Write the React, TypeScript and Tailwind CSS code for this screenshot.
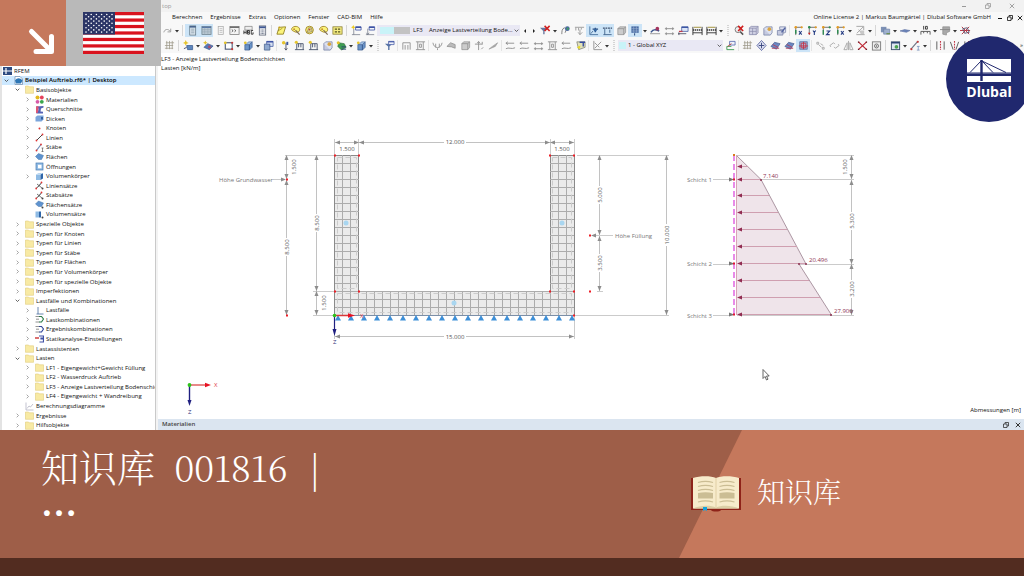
import type { ReactNode } from "react";

/* ---------- toolbar icons, drawn on a 12 x 12 grid ---------- */

const ICONS: Record<string, ReactNode> = {
  redo: <path d="M2 8c1-4 5-4 7-1M9.500 4v3.500H6" fill="none" stroke="#999" />,
  panel: (
    <g>
      <rect x="3" y="1" width="6.500" height="10" fill="#dbe6ef" stroke="#5d7280" strokeWidth=".8" />
      <path d="M3 2h6.500" stroke="#3b5a86" strokeWidth="1.600" />
      <path d="M4.500 4.500h3.500M4.500 6.500h3.500M4.500 8.500h3.500" stroke="#7f93a1" strokeWidth=".8" />
    </g>
  ),
  sheet: (
    <g>
      <rect x="1" y="1.500" width="10" height="9" fill="#b9c8d3" stroke="#6b7f8c" strokeWidth=".8" />
      <path d="M1 2.500h10" stroke="#5877a5" strokeWidth="1.500" />
      <path d="M1 5h10M1 7.500h10M4 3v7.500M7.500 3v7.500" stroke="#8fa1ae" strokeWidth=".5" />
    </g>
  ),
  doc: (
    <g>
      <rect x="3.500" y="1.500" width="5.500" height="9" fill="#f5f5f5" stroke="#aaa" strokeWidth=".8" />
      <path d="M5 4h3M5 6h3M5 8h3" stroke="#aaa" strokeWidth=".7" />
    </g>
  ),
  console: (
    <g>
      <rect x="1" y="1.500" width="10" height="9" fill="#f4f4f4" stroke="#777" strokeWidth=".8" />
      <path d="M1 2.500h10" stroke="#666" strokeWidth="1.400" />
      <path d="m3 5 1.500 1.200L3 7.500M6 5l1.500 1.200L6 7.500" fill="none" stroke="#333" strokeWidth=".8" />
    </g>
  ),
  report: (
    <g>
      <path d="M2 1.500h8v4H2z" fill="#eee" stroke="#777" strokeWidth=".7" />
      <path d="M1 6v4M3.500 6v4M1 8h2.500M5 6v4h2V8H5V6h2v2M11 6H9v4h2V8" fill="none" stroke="#222" strokeWidth=".9" />
    </g>
  ),
  calc: (
    <g>
      <rect x="2.500" y="1" width="7" height="10" fill="#eef0f3" stroke="#555d70" strokeWidth=".8" />
      <path d="M2.500 2.500h7" stroke="#3e5794" strokeWidth="2" />
      <path d="M4 5.500h4M4 7.500h4M4 9.300h4" stroke="#6c7488" strokeWidth="1" strokeDasharray="1 .5" />
    </g>
  ),
  poly: (
    <g>
      <path d="m3.500 2.500 7-.5-2.500 8H1z" fill="#fbf37a" stroke="#8b7a19" strokeWidth=".9" />
      <path d="M2 6.500 7 3.500" stroke="#8b7a19" strokeWidth=".7" />
      <circle cx="3.500" cy="2.500" r="1" fill="#c9a018" />
    </g>
  ),
  lasso: (
    <g>
      <path d="M2 3.500C4 .5 10 1 10.500 4.500S7 8.500 5.500 7.500 1 6.500 2 3.500z" fill="#fbf37a" stroke="#9a7d1c" strokeWidth=".9" />
      <path d="m6 5.500 4.500 5" stroke="#7b6a55" strokeWidth="1.200" />
      <circle cx="4.500" cy="4.500" r="1" fill="#c5882a" />
    </g>
  ),
  ring: (
    <g>
      <circle cx="6" cy="5.500" r="4.200" fill="#fbf37a" stroke="#9a7d1c" strokeWidth=".9" />
      <path d="m3.500 8 1.500-5h3l1 4-3 1z" fill="#d6d08c" stroke="#7b6a55" strokeWidth=".6" />
      <circle cx="6" cy="5" r="1" fill="#c5482a" />
    </g>
  ),
  yellowTable: (
    <g>
      <rect x="1" y="2" width="10" height="8" fill="#f7ef84" stroke="#7f7224" strokeWidth=".8" />
      <path d="M3 4.500h2.500M6.500 4.500H9M3 7.500h2.500M6.500 7.500H9" stroke="#54531f" strokeWidth="1.400" />
    </g>
  ),
  starLoad: (
    <g>
      <path d="M3 4v6.500M1 10.500h9" stroke="#6f7584" strokeWidth=".8" />
      <path d="M5 2h6v3.500H5z" fill="#f3f5fa" stroke="#4358a5" strokeWidth=".9" />
      <path d="M5 2.500h6" stroke="#3349a1" strokeWidth="1.400" />
      <path d="m2.500 0 .8 1.700L5 2.500l-1.700.8-.8 1.700-.8-1.700L0 2.500l1.700-.8z" fill="#eccb21" />
    </g>
  ),
  load: (
    <g>
      <path d="M3 4v6.500M1 10.500h9M1.500 8.500 3 10.500l1.500-2" fill="none" stroke="#6f7584" strokeWidth=".8" />
      <path d="M4.500 2h6v3.500h-6z" fill="#f3f5fa" stroke="#4358a5" strokeWidth=".9" />
      <path d="M4.500 2.500h6" stroke="#3349a1" strokeWidth="1.400" />
    </g>
  ),
  filterX: (
    <g>
      <path d="M0 3h8L5 6.500V10H3.500V6.500z" fill="#6678a0" />
      <path d="m5 1 5.500 5.500M10.500 1 5 6.500" stroke="#cf1f1f" strokeWidth="1.700" />
    </g>
  ),
  filter: (
    <g>
      <path d="M1 4h8L6 7v4H4.500V7z" fill="#5673a5" />
      <path d="M5 1.500h6V5H5z" fill="#eef1fa" stroke="#4358a5" strokeWidth=".8" />
      <path d="M5 2h6" stroke="#3349a1" />
    </g>
  ),
  eye: (
    <g>
      <path d="M2 10c0-3 0-6 3-7l2 2-1.500 3.500" fill="none" stroke="#7b7b7b" />
      <circle cx="8" cy="4" r="2.600" fill="#4c6a9f" />
      <circle cx="8.500" cy="4" r="1.200" fill="#3ea05d" />
    </g>
  ),
  grayRake: <path d="M1 2.500h10M2 3v3M5 3v3M8 3v2M6.500 5v5.500M4.500 8l2 2.500L9 8" fill="none" stroke="#9a9a9a" />,
  support: (
    <g>
      <path d="M2 1.500v9M2 10.500h9M3 9.500l2.500-3" fill="none" stroke="#47709b" />
      <path d="M5 4.500h6M8 3v5" stroke="#2b4d80" strokeWidth="1.400" />
      <circle cx="8" cy="5.500" r="1.700" fill="#3466a2" />
    </g>
  ),
  beam: (
    <g>
      <path d="M1 3.500h10" stroke="#3b4e6c" strokeWidth="1.300" strokeDasharray="2 .8" />
      <path d="M3 4v6.500M1.500 10.500h9M8.500 5v3.500" stroke="#42658d" />
    </g>
  ),
  cube: (
    <g>
      <path d="m2 4 2-2h6.500v6l-2 2.500H2z" fill="#ccc" stroke="#929292" strokeWidth=".8" />
      <path d="M2 4h6.500v6.500M8.500 4l2-2" fill="none" stroke="#888" strokeWidth=".8" />
    </g>
  ),
  mesh: (
    <g>
      <rect x="1.500" y="1.500" width="8" height="7" fill="#4a6da5" />
      <path d="M1.500 4h8M1.500 6.500h8M4 1.500v7M7 1.500v7" stroke="#a5b9d8" strokeWidth=".6" />
      <path d="M5 9v2.500" stroke="#3a5787" strokeWidth="1.200" />
    </g>
  ),
  deform: (
    <g>
      <path d="M0 9.500h11" stroke="#888" strokeWidth=".9" />
      <path d="M1 8c2-3 4-4 9-1.500" fill="none" stroke="#3b568d" strokeWidth="1.800" />
      <circle cx="8" cy="4" r="2" fill="#a3345e" />
    </g>
  ),
  dims: <path d="M1 4h10M1 9.500h10M2.500 2.500v3M9.500 2.500v3M2.500 8v3M9.500 8v3" fill="none" stroke="#8d8d8d" />,
  dims2: <path d="M1 3.500h9M3 2l-2 1.500L3 5M1 9.500c3-2 6 1 10-1" fill="none" stroke="#8d8d8d" />,
  blueDim: (
    <g>
      <path d="M0 9.500h9M1 8v3" stroke="#556" />
      <path d="M4 2h7v5H4z" fill="#dce5f7" stroke="#4059a1" strokeWidth=".8" />
      <path d="M4 2.500h7" stroke="#3550a0" strokeWidth="1.400" />
      <path d="M1 7h4" stroke="#c23b4b" strokeWidth="1.400" />
    </g>
  ),
  blackDim: (
    <g>
      <path d="M1 2v9M11 2v9M1 8.500h10" stroke="#333" />
      <path d="M1 5.500h10" stroke="#333" strokeWidth="1.800" strokeDasharray="1.500 .7" />
      <path d="M2 2.500h8" stroke="#ab9c50" strokeWidth="1.200" />
    </g>
  ),
  lensX: (
    <g>
      <circle cx="4.500" cy="5" r="3.300" fill="#eee" stroke="#777" />
      <path d="m7 7.500 3 3" stroke="#555" strokeWidth="1.600" />
      <path d="m4.500 1 5.500 5.500M10 1 4.500 6.500" stroke="#cf1f1f" strokeWidth="1.700" />
    </g>
  ),
  box: (
    <g>
      <path d="m1.500 3 2-1.500H11v7L9 10.500H1.500z" fill="#cfd0e3" stroke="#8586a8" strokeWidth=".8" />
      <path d="M1.500 3.500H9v7M9 3.500l2-2M5 3.500v7M1.500 7H9" fill="none" stroke="#8586a8" strokeWidth=".7" />
    </g>
  ),
  boxStar: (
    <g>
      <path d="M2 4h7v7H2z" fill="#c5cae0" stroke="#7580a5" strokeWidth=".8" />
      <path d="m2 4 2-2h7v6.500L9 11" fill="#dde1ef" stroke="#7580a5" strokeWidth=".8" />
      <circle cx="8" cy="4.500" r="2" fill="#d9a441" />
    </g>
  ),
  boxTool: (
    <g>
      <path d="M1.500 6h6v5h-6z" fill="#c5cae0" stroke="#7580a5" strokeWidth=".8" />
      <path d="M4 2h6.500v6L8 9V5H4z" fill="#dde1ef" stroke="#7580a5" strokeWidth=".8" />
      <path d="m6 8 4-5" stroke="#5262a0" strokeWidth="1.400" />
    </g>
  ),
  axis: (
    <g>
      <path d="M3 2v9M3 2.500h7" stroke="#444" strokeWidth=".8" />
      <circle cx="3" cy="2.500" r="1.400" fill="#e49b22" />
      <circle cx="9.500" cy="2.500" r="1.200" fill="#e49b22" />
      <path d="M3 5.500v4" stroke="#2c8c50" strokeWidth="1.600" />
      <path d="m6.500 6.500 3 4M9.500 6.500l-3 4" stroke="#263d83" strokeWidth="1.200" />
    </g>
  ),
  axisY: (
    <g>
      <path d="M2.500 1.500v9M2.500 2.500h8" stroke="#444" strokeWidth=".8" />
      <circle cx="2.500" cy="2.500" r="1.400" fill="#2c8c50" />
      <circle cx="9.500" cy="2.500" r="1.200" fill="#e49b22" />
      <path d="m1 8.500 1.500 2.500L4 8.500" fill="#c22" />
      <path d="m6.500 6 1.500 2 1.500-2M8 8v3" fill="none" stroke="#263d83" strokeWidth="1.200" />
    </g>
  ),
  axisZ: (
    <g>
      <path d="M2.500 1.500v9M2.500 2.500h8" stroke="#444" strokeWidth=".8" />
      <circle cx="2.500" cy="2.500" r="1.400" fill="#e49b22" />
      <circle cx="9.500" cy="2.500" r="1.200" fill="#2c8c50" />
      <path d="M2.500 5.500v5" stroke="#2c8c50" strokeWidth="1.400" />
      <path d="M6 6.500h3.500L6 10.500h3.500" fill="none" stroke="#263d83" strokeWidth="1.200" />
    </g>
  ),
  gear: (
    <g>
      <path d="M1.500 1.500h8v4M1.500 10.500h9M2 9l7-7M4 5l4 5" fill="none" stroke="#a2a2a2" />
      <rect x="6" y="6" width="4" height="4" fill="#c8c8c8" />
    </g>
  ),
  layers: (
    <g>
      <path d="M1 2h6v6H1z" fill="#7d91b5" />
      <path d="M4 4.500h6.500v5.500H4z" fill="#9fb0cd" stroke="#687ca5" strokeWidth=".7" />
      <path d="M7 9.500h4" stroke="#6b8d4e" strokeWidth="1.400" />
    </g>
  ),
  surface: <path d="m0 6.500 5-1.500 6 1-4 2z" fill="#6c85ba" stroke="#566b9c" strokeWidth=".6" />,
  ten: (
    <g>
      <path d="M1 10.500V7h10v3.500M4 7v2M8 7v2" fill="none" stroke="#555" />
      <path d="M4 1v4M6 1.500h2v3H6z" fill="none" stroke="#222" strokeWidth=".9" />
    </g>
  ),
  grayFrame: (
    <g>
      <path d="M3 2h7.500v5L7 8.500v2.500L3 10z" fill="#a9a9a9" stroke="#888" strokeWidth=".7" />
      <path d="M0 5h11" stroke="#888" />
    </g>
  ),
  redWeb: (
    <g>
      <path d="m2 2 8 8M10 2l-8 8M0 6h11" stroke="#b22e3c" />
      <path d="m3 4 5-1 2 5-5 1z" fill="none" stroke="#5c536e" />
    </g>
  ),
  nodeGrid: <path d="M2 3h9M1 6h9M1 9h9M3 1v9M6 1v9M9 1v9" stroke="#9b9787" strokeWidth=".8" />,
  starBlue: (
    <g>
      <path d="M4 6h6.500v4.500H5z" fill="#5c86bd" stroke="#36588d" strokeWidth=".8" />
      <path d="m3 0 1 2.200 2.200 1L4 4.200 3 6.400 2 4.200l-2-1 2-1z" fill="#e5c42b" />
      <path d="M1 9.500 4 8" stroke="#4c4c62" />
    </g>
  ),
  starSurface: (
    <g>
      <path d="m1 8 4-4 6 2.500-4 4z" fill="#5779b5" stroke="#3c5689" strokeWidth=".7" />
      <circle cx="7" cy="7.500" r="1.500" fill="#b24b66" />
      <path d="m2.500.5.8 1.800 1.700.7-1.700.8-.8 1.700-.7-1.700L0 3l1.800-.7z" fill="#e5c42b" />
    </g>
  ),
  starOpening: (
    <g>
      <rect x="2.500" y="3" width="7.500" height="7" fill="#fff" stroke="#4b5875" strokeWidth="1.200" />
      <circle cx="2.500" cy="3" r="1.500" fill="#e5c42b" />
      <circle cx="10" cy="10" r="1.200" fill="#c13b3b" />
      <circle cx="10" cy="3" r="1.200" fill="#c13b3b" />
    </g>
  ),
  starSolid: (
    <g>
      <path d="M2 5h5v6H2zM7 5l3-3v6l-3 3z" fill="#6a94c8" stroke="#36588d" strokeWidth=".7" />
      <path d="m3 5 3-3h4L7 5z" fill="#a3c2e4" stroke="#36588d" strokeWidth=".5" />
      <circle cx="2.500" cy="3" r="1.500" fill="#e5c42b" />
    </g>
  ),
  bluePanel: (
    <g>
      <path d="M1.500 4.500h6v6.500h-6z" fill="#8fa9cf" stroke="#46608c" strokeWidth=".8" />
      <path d="M4 1.500h7V7H7.500V4.500H4z" fill="#d7e1f1" stroke="#3d57a0" strokeWidth=".8" />
      <path d="M4 2h7" stroke="#3349a1" strokeWidth="1.400" />
    </g>
  ),
  pin: (
    <g>
      <path d="M6.500 3v8M5 9l1.500 2L8 9" fill="none" stroke="#556" />
      <circle cx="4" cy="3" r="1.900" fill="#e5c42b" />
      <path d="M7 2h2v3.500H7z" fill="#3d57a0" />
    </g>
  ),
  starFrame: (
    <g>
      <path d="M3 4h7v6.500M3 4v6.500M1 10.500h10M5 4v4M7.500 4v4" fill="none" stroke="#4c566e" />
      <circle cx="2.500" cy="2.500" r="1.700" fill="#e5c42b" />
    </g>
  ),
  starGreen: (
    <g>
      <path d="m3 3 6 1 2 4-5 3-4-4z" fill="#3c9c51" stroke="#2d6c3b" strokeWidth=".7" />
      <path d="M6 7.500h5M6 10h5" stroke="#28406e" />
      <circle cx="2.500" cy="3" r="1.700" fill="#e5c42b" />
    </g>
  ),
  archG: <path d="M2 10.500V3h8v7.500M4.500 5.500v5M7.500 5.500v5" fill="none" stroke="#949494" />,
  frameG: <path d="M1 2h10M1 10.500h10M3 2v8.500M9 2v8.500M5 4.500h2v3.500H5z" fill="none" stroke="#949494" />,
  bowG: <path d="M1 3c1 7 9 7 10 0M4 8V4M8 8V4M6 9v2" fill="none" stroke="#949494" />,
  patchG: <path d="m1 7 4-4 5 2v4L6 7.500z" fill="#bbb" stroke="#8d8d8d" strokeWidth=".8" />,
  arrowsG: <path d="M1 4.500h8M5 2v9M3.500 3.500 5 1.500l1.500 2M9 2v3M10 8l-2 2" fill="none" stroke="#949494" />,
  slashG: <path d="m1 10 3-2.500L10.500 3 8 7z" fill="#aaa" stroke="#949494" strokeWidth=".6" />,
  note: (
    <g>
      <path d="M2 2h9v6L4 10.500z" fill="#e3e3ba" stroke="#7a7d72" strokeWidth=".8" />
      <path d="M5 2.500h6M9 3v4" stroke="#364d9f" strokeWidth="1.500" />
      <path d="m2 8 4-2-1 4z" fill="#eadb27" />
    </g>
  ),
  chartG: <path d="M2 1v9.500h9M3 9l7-7M3 3l5 5" fill="none" stroke="#949494" />,
  csAxes: (
    <g>
      <path d="M2 10.500V7h5M2 10.500h8" fill="none" stroke="#3f9a55" />
      <path d="M5 1.500h6V5.500H5z" fill="#eef1fa" stroke="#4358a5" strokeWidth=".8" />
      <path d="m3 7 4-3" stroke="#b33" />
    </g>
  ),
  target: (
    <g>
      <path d="M6 .5 11 6l-5 5.500L1 6z" fill="#dde0f0" stroke="#5662a0" strokeWidth=".9" />
      <path d="M6 3v6M3 6h6" stroke="#39457f" />
    </g>
  ),
  blueSurf: (
    <g>
      <path d="m1 7 4-4.500 6 1.500-4 6z" fill="#6b87c2" stroke="#44598d" strokeWidth=".7" />
      <path d="M2 9h8M3 5l6 3" stroke="#b14562" />
    </g>
  ),
  redGrid: (
    <g>
      <rect x="2" y="2" width="8" height="8" fill="#a7b4d5" stroke="#44598d" strokeWidth=".8" />
      <path d="M3.500 3.500h5v5h-5zM6 2v8M1 6.500h10" fill="none" stroke="#c2364b" />
    </g>
  ),
  tagG: <path d="M2 2.500h2v2H2zM4 5l3 3M8 8h2v2H8zM6 4l3 2" fill="none" stroke="#aaa" />,
  turnG: <path d="M2 7.500 1 6l4-3 1.500 1.500M10 4.500 11 6 7 9 5.500 7.500" fill="none" stroke="#aaa" />,
  mirrorG: <path d="M6 1v10M4.500 3 1 10.500h3.500zM7.500 3 11 10.500H7.500z" fill="none" stroke="#aaa" />,
  cross: (
    <g>
      <path d="m1.500 2 9 8.500M10.500 2l-9 8.500" stroke="#bd2431" strokeWidth="1.300" />
      <path d="M1 1.500h1.500v1.500H1zM9.500 1.500H11v1.500H9.500zM1 9.500h1.500V11H1zM9.500 9.500H11V11H9.500z" fill="#6b1e28" />
    </g>
  ),
  camera: (
    <g>
      <rect x="1.500" y="2" width="9" height="9" fill="#eee" stroke="#7c7c7c" />
      <circle cx="6" cy="6.500" r="2.200" fill="none" stroke="#6c6c6c" />
      <circle cx="6" cy="6.500" r=".8" fill="#5c5c5c" />
    </g>
  ),
  greenTable: (
    <g>
      <rect x="1.500" y="2" width="9" height="8.500" fill="#dde7f1" stroke="#3b506e" />
      <path d="M1.500 3h9" stroke="#2c4473" strokeWidth="1.600" />
      <circle cx="7" cy="7.500" r="2" fill="#4aa24f" />
    </g>
  ),
  lineI: (
    <g>
      <path d="M1 10 8 2" stroke="#6b7282" strokeWidth="1.200" />
      <circle cx="8.500" cy="2" r="1.200" fill="#c13b3b" />
      <circle cx="1.500" cy="10" r="1.200" fill="#c13b3b" />
      <path d="M9 7v4M7.500 7h3M7.500 11h3" stroke="#7c93bd" strokeWidth=".9" />
    </g>
  ),
  bars: (
    <g>
      <path d="M2 1.500v9M10 1.500v9" stroke="#555" />
      <path d="M6 1v10" stroke="#c13b4b" strokeDasharray="2 1" strokeWidth="1.200" />
    </g>
  ),
  fork: (
    <g>
      <path d="m1.500 2 3 8.500M10.500 2l-3 8.500" stroke="#555" />
      <path d="M6 1v10" stroke="#c13b4b" strokeDasharray="2 1" strokeWidth="1.200" />
    </g>
  ),
};

function Tool({ name, on = false }: { name: string; on?: boolean }) {
  return (
    <button
      type="button"
      aria-label={name}
      className={
        on
          ? "flex h-[13px] w-[14px] shrink-0 items-center justify-center bg-[#cce4f7]"
          : "flex h-[13px] w-[14px] shrink-0 items-center justify-center"
      }
    >
      <svg viewBox="0 0 12 12" className="h-[11px] w-[11px]">
        {ICONS[name]}
      </svg>
    </button>
  );
}

/* "|" separator, "-" small gap, "=" wide separator, "v" menu caret, "*name" pressed button */
function Tools({ items }: { items: string }) {
  return (
    <>
      {items.split(" ").map((item, i) => {
        if (item === "|")
          return <span key={i} className="mx-[2px] h-[11px] w-px shrink-0 bg-[#d6d6d6]" />;
        if (item === "=")
          return <span key={i} className="mx-[3px] h-[11px] w-[2px] shrink-0 border-x border-dotted border-[#d4d4d4]" />;
        if (item === "-") return <span key={i} className="mx-px h-[11px] w-px shrink-0 bg-[#e4e4e4]" />;
        if (item === "v")
          return (
            <svg key={i} viewBox="0 0 6 6" className="h-[6px] w-[6px] shrink-0">
              <path d="M1 2h4L3 4.500z" fill="#333" />
            </svg>
          );
        const on = item.startsWith("*");
        return <Tool key={i} name={on ? item.slice(1) : item} on={on} />;
      })}
    </>
  );
}

function Chevron({ open = false, className }: { open?: boolean; className: string }) {
  return (
    <svg viewBox="0 0 6 6" className={className}>
      <path d={open ? "M.8 2 3 4.200 5.200 2" : "M2 .8 4.200 3 2 5.200"} fill="none" stroke={open ? "#333" : "#888"} strokeWidth=".9" />
    </svg>
  );
}

/* ---------- navigator tree ---------- */

const TREE_ICONS: Record<string, ReactNode> = {
  folder: <path d="M.5 1h3l.7.8h4.300v6.500H.5z" fill="#f8eaa4" stroke="#e0cd7c" strokeWidth=".6" />,
  app: (
    <g>
      <rect width="9" height="9" fill="#2d4a80" />
      <path d="M0 4.500h9M3 1v7" stroke="#fff" strokeWidth="1.200" />
    </g>
  ),
  file: (
    <g>
      <path d="M1 .5h5L8.500 3v5.500H1z" fill="#fff" stroke="#6b87a8" strokeWidth=".7" />
      <path d="M1 4.500C3 1.500 6 1.500 8.500 4.500L7 7.500H2z" fill="#2d76b5" />
    </g>
  ),
  material: (
    <g>
      <circle cx="2.500" cy="2.500" r="2" fill="#e2b81c" />
      <circle cx="6.800" cy="2.500" r="1.900" fill="#e5425c" />
      <circle cx="2.500" cy="6.800" r="1.900" fill="#d65aa8" />
      <circle cx="6.800" cy="6.800" r="1.900" fill="#3aa64c" />
    </g>
  ),
  section: (
    <g>
      <path d="M1 1.500 8.500 1v1.500L6 3.500l-.5 3 2.500.2V8.500H1.500L1 7l2-.5.500-3L1 3.200z" fill="#5563b5" />
      <path d="M1 1.500 3.500 1 3 7.500l-2 .8z" fill="#e05673" />
    </g>
  ),
  slab: (
    <g>
      <path d="m.5 3 2-1.500h6v4l-2 2h-6z" fill="#7ba5db" />
      <path d="M6 3h2v2.500H6z" fill="#345f9e" />
    </g>
  ),
  node: <circle cx="4.500" cy="4.500" r="1" fill="#d33" />,
  line: (
    <g>
      <path d="m1.500 7.500 6-6" stroke="#333" strokeWidth=".9" />
      <circle cx="1.500" cy="7.500" r=".9" fill="#d33" />
      <circle cx="7.500" cy="1.500" r=".9" fill="#d33" />
    </g>
  ),
  member: (
    <g>
      <path d="m1.500 7.500 4.500-6" stroke="#6e8db8" strokeWidth="1.200" />
      <circle cx="1.500" cy="7.500" r=".9" fill="#d33" />
      <circle cx="6" cy="1.500" r=".9" fill="#d33" />
      <path d="M7.500 5v3.500M6.500 5h2M6.500 8.500h2" stroke="#444" strokeWidth=".6" />
    </g>
  ),
  surface: <path d="m.5 4.500 3-3 5 2-2 4H3.500z" fill="#5f93cf" stroke="#4774ab" strokeWidth=".5" />,
  surfaceSet: (
    <g>
      <path d="m.5 4 3-3 5 2-2 3.500H3.500z" fill="#5f93cf" stroke="#4774ab" strokeWidth=".5" />
      <circle cx="7.500" cy="7.500" r="1" fill="#444" />
    </g>
  ),
  opening: (
    <g>
      <rect x="1" y="1" width="7" height="7" fill="#8fbbe4" stroke="#4a7db3" strokeWidth=".7" />
      <rect x="3" y="2.800" width="3.500" height="3.500" fill="#fff" />
    </g>
  ),
  solid: (
    <g>
      <path d="M1 2.500h4.500v5.500H1z" fill="#8fbbe4" />
      <path d="M5.500 2.500 8 1v5.500L5.500 8z" fill="#2f66a8" />
      <path d="M1 2.500 3.500 1H8L5.500 2.500z" fill="#b9d6f0" />
    </g>
  ),
  solidSet: (
    <g>
      <path d="M.5 1.500h3.500v6H.5z" fill="#8fbbe4" />
      <path d="M4 1.500h2v6H4z" fill="#2f66a8" />
      <circle cx="7.500" cy="7.500" r="1" fill="#444" />
    </g>
  ),
  lineSet: (
    <g>
      <path d="m1 7.500 3.500-3L6.500 1.500M2 3l5 4" stroke="#555" strokeWidth=".8" />
      <circle cx="1.200" cy="7.500" r=".9" fill="#d33" />
      <circle cx="6.500" cy="1.500" r=".9" fill="#d33" />
      <circle cx="7.500" cy="7.500" r="1" fill="#444" />
    </g>
  ),
  cases: <path d="M1.500 8h7M3 1v7" stroke="#5a7ba8" strokeWidth=".9" />,
  combo: (
    <g>
      <path d="M.5 1.500h4M.5 7h4M1 4.200h3" stroke="#777" strokeWidth=".8" />
      <path d="M4 1.500h2.500L8.500 4 6.500 7H4" fill="none" stroke="#2d7d4a" strokeWidth="1.200" />
    </g>
  ),
  combo2: (
    <g>
      <path d="M.5 1.500h4M.5 7h4M1 4.200h3" stroke="#777" strokeWidth=".8" />
      <path d="M4 1.500h2.500L8.500 4 6.500 7H4" fill="none" stroke="#33479a" strokeWidth="1.200" />
    </g>
  ),
  analysis: (
    <g>
      <path d="M0 4h4" stroke="#c33" strokeWidth="1.400" />
      <path d="M4 2h4.500v2H6v1h2.500v3H4.500" fill="none" stroke="#4051a5" strokeWidth="1.200" />
    </g>
  ),
  diagram: <path d="M1 .5V8h7.500M2 6.500 4 4l1.500 1L8 2" fill="none" stroke="#aab" strokeWidth=".7" />,
};

type Row = [level: number, state: "open" | "shut" | "leaf", icon: string, label: string];

const ROWS: Row[] = [
  [0, "open", "file", "Beispiel Auftrieb.rf6* | Desktop"],
  [1, "open", "folder", "Basisobjekte"],
  [2, "shut", "material", "Materialien"],
  [2, "shut", "section", "Querschnitte"],
  [2, "shut", "slab", "Dicken"],
  [2, "shut", "node", "Knoten"],
  [2, "shut", "line", "Linien"],
  [2, "shut", "member", "Stäbe"],
  [2, "shut", "surface", "Flächen"],
  [2, "leaf", "opening", "Öffnungen"],
  [2, "shut", "solid", "Volumenkörper"],
  [2, "leaf", "lineSet", "Liniensätze"],
  [2, "leaf", "lineSet", "Stabsätze"],
  [2, "leaf", "surfaceSet", "Flächensätze"],
  [2, "leaf", "solidSet", "Volumensätze"],
  [1, "shut", "folder", "Spezielle Objekte"],
  [1, "shut", "folder", "Typen für Knoten"],
  [1, "shut", "folder", "Typen für Linien"],
  [1, "shut", "folder", "Typen für Stäbe"],
  [1, "shut", "folder", "Typen für Flächen"],
  [1, "shut", "folder", "Typen für Volumenkörper"],
  [1, "shut", "folder", "Typen für spezielle Objekte"],
  [1, "shut", "folder", "Imperfektionen"],
  [1, "open", "folder", "Lastfälle und Kombinationen"],
  [2, "shut", "cases", "Lastfälle"],
  [2, "shut", "combo", "Lastkombinationen"],
  [2, "shut", "combo2", "Ergebniskombinationen"],
  [2, "shut", "analysis", "Statikanalyse-Einstellungen"],
  [1, "shut", "folder", "Lastassistenten"],
  [1, "open", "folder", "Lasten"],
  [2, "shut", "folder", "LF1 - Eigengewicht+Gewicht Füllung"],
  [2, "shut", "folder", "LF2 - Wasserdruck Auftrieb"],
  [2, "shut", "folder", "LF3 - Anzeige Lastverteilung Bodenschic"],
  [2, "shut", "folder", "LF4 - Eigengewicht + Wandreibung"],
  [1, "leaf", "diagram", "Berechnungsdiagramme"],
  [1, "shut", "folder", "Ergebnisse"],
  [1, "shut", "folder", "Hilfsobjekte"],
];

const INDENT = ["pl-[2px]", "pl-[13px]", "pl-[23px]"];

function Navigator() {
  return (
    <nav className="flex w-[156px] shrink-0 flex-col overflow-hidden border-r border-l-2 border-r-[#c9c9c9] border-l-[#e3e3e3] bg-white pt-[66px]">
      <div className="flex min-h-0 flex-1 items-center gap-[2px] pl-px leading-none">
        <svg viewBox="0 0 9 9" className="h-[8px] w-[9px]" preserveAspectRatio="none">
          {TREE_ICONS.app}
        </svg>
        RFEM
      </div>
      {ROWS.map(([level, state, icon, label]) => (
        <div
          key={label}
          className={`flex min-h-0 flex-1 items-center leading-none whitespace-nowrap ${INDENT[level]} ${
            level === 0 ? "bg-[#cce8ff] font-semibold text-black" : ""
          }`}
        >
          {state === "leaf" ? (
            <span className="mr-[5px] w-[5px] shrink-0" />
          ) : (
            <Chevron open={state === "open"} className="mr-[5px] h-[5px] w-[5px] shrink-0" />
          )}
          <svg viewBox="0 0 9 9" className="mr-[2px] h-[9px] w-[9px] shrink-0">
            {TREE_ICONS[icon]}
          </svg>
          {label}
        </div>
      ))}
    </nav>
  );
}

/* ---------- structural drawing ---------- */

const GRAY = "#8c8c8c";

function Arrow({ x, y, dir, fill = GRAY }: { x: number; y: number; dir: "l" | "r" | "u" | "d"; fill?: string }) {
  const d = {
    l: `M${x} ${y}l5-2v4z`,
    r: `M${x} ${y}l-5-2v4z`,
    u: `M${x} ${y}l-2 5h4z`,
    d: `M${x} ${y}l-2-5h4z`,
  }[dir];
  return <path d={d} fill={fill} />;
}

function Label({ x, y, turn = false, w = 18, children }: { x: number; y: number; turn?: boolean; w?: number; children: string }) {
  return (
    <g transform={turn ? `rotate(-90 ${x} ${y})` : undefined}>
      <rect x={x - w / 2} y={y - 3} width={w} height="6" fill="#fff" />
      <text x={x} y={y + 2} textAnchor="middle">
        {children}
      </text>
    </g>
  );
}

function DimV({ x, y1, y2 }: { x: number; y1: number; y2: number }) {
  return (
    <g>
      <path d={`M${x - 0.5} ${y1}V${y2}`} stroke="#c2c2c2" />
      <Arrow x={x - 0.5} y={y1} dir="u" />
      <Arrow x={x - 0.5} y={y2} dir="d" />
    </g>
  );
}

function DimH({ y, x1, x2 }: { y: number; x1: number; x2: number }) {
  return (
    <g>
      <path d={`M${x1} ${y}H${x2}`} stroke="#c2c2c2" />
      <Arrow x={x1} y={y} dir="l" />
      <Arrow x={x2} y={y} dir="r" />
    </g>
  );
}

const REDS = [
  [335, 155], [359, 155], [335, 291], [359, 291], [550, 155], [574, 155], [550, 291], [574, 291],
  [574, 315], [287, 179], [287, 315], [590, 235], [590, 291],
];

const LOAD_ARROWS = [
  [167, 748], [180, 761], [196, 769], [213, 778], [230, 787], [247, 797], [264, 806], [281, 809], [298, 820], [315, 831],
];

function steps(from: number, to: number, by: number) {
  return Array.from({ length: Math.floor((to - from) / by) + 1 }, (_, i) => from + i * by);
}

function Drawing() {
  return (
    <svg viewBox="158 73 866 346" preserveAspectRatio="xMinYMin meet" className="min-h-0 w-full flex-1" fontSize="6" fill="#555">
      <g stroke="#cbcbcb" fill="none">
        <path d="M334.500 139v16M358.500 139v16M550.500 139v16M574.500 139v16M285 155.500h49M577 155.500h92M574 315.500h95M313 291.500h22M313 315.500h22M334.500 315v24M574.500 315v24M597 291.500h6M273 179.500h10M595 235.500h18" />
        <path d="M737 155.500h117M761 179.500h93M806 264.500h48M737 315.500h117M713 179.500h20M713 264.500h20M713 315.500h20" />
      </g>

      <path d="M334.500 155.500h24v136h192v-136h24v160h-240z" fill="#ebebeb" stroke="#8a8a8a" />
      <g stroke="#acacac">
        {steps(163, 283, 8).map((y) => (
          <path key={y} d={`M335 ${y + 0.5}h24M550 ${y + 0.5}h24`} />
        ))}
        <path d="M335 291.500h239M335 299.500h239M335 307.500h239" />
        {steps(342, 566, 8).map((x) => (
          <path key={x} d={x < 358 || x > 550 ? `M${x + 0.5} 155V315` : `M${x + 0.5} 291V315`} />
        ))}
        <path d="M358.500 291v24M550.500 291v24" />
      </g>
      <path d="M337.500 157.500h19v131h-19zM552.500 157.500h19v131h-19zM337.500 293.500h234v19h-234z" fill="none" stroke="#cbcbcb" strokeDasharray="5 3" />
      <g fill="#a9d6f0">
        <circle cx="346" cy="223" r="2.500" />
        <circle cx="562" cy="223" r="2.500" />
        <circle cx="454" cy="303" r="2.500" />
      </g>
      <path d="M335 315.500h239" stroke="#7b8fa8" />
      {steps(338, 572, 13).map((x) => (
        <path key={x} d={`M${x} 315l3 5.500h-6z`} fill="#3d8fd8" />
      ))}

      <DimH y={142.5} x1={335} x2={359} />
      <DimH y={142.5} x1={359} x2={550} />
      <DimH y={142.5} x1={550} x2={574} />
      <DimH y={336.5} x1={335} x2={574} />
      <DimV x={287} y1={155} y2={179} />
      <DimV x={287} y1={180} y2={315} />
      <DimV x={317} y1={155} y2={291} />
      <DimV x={317} y1={291} y2={315} />
      <DimV x={600} y1={155} y2={235} />
      <DimV x={600} y1={236} y2={291} />
      <DimV x={667} y1={155} y2={315} />
      <Arrow x={286} y={179.5} dir="r" />
      <Arrow x={591} y={235.5} dir="l" />

      <Label x={347} y={149}>1.500</Label>
      <Label x={562} y={149}>1.500</Label>
      <Label x={455} y={142} w={22}>12.000</Label>
      <Label x={455} y={337} w={22}>15.000</Label>
      <Label x={294} y={167} w={14} turn>1.500</Label>
      <Label x={287} y={247} turn>8.500</Label>
      <Label x={317} y={223} turn>8.500</Label>
      <Label x={324} y={303} w={14} turn>1.500</Label>
      <Label x={600} y={195} turn>5.000</Label>
      <Label x={600} y={263} turn>3.500</Label>
      <Label x={667} y={235} w={22} turn>10.000</Label>
      <g fill="#777">
        <text x="273" y="182" textAnchor="end">Höhe Grundwasser</text>
        <text x="615" y="238">Höhe Füllung</text>
        <text x="712" y="182" textAnchor="end">Schicht 1</text>
        <text x="712" y="266" textAnchor="end">Schicht 2</text>
        <text x="712" y="318" textAnchor="end">Schicht 3</text>
      </g>

      <path d="M736.500 155.500l24.500 24L806 264h-7l32.500 51h-95z" fill="#efe4ea" />
      <path d="M736.500 155.500l24.500 24L806 264h-7l32.500 51" fill="none" stroke="#a38b98" strokeWidth=".9" />
      {LOAD_ARROWS.map(([y, end]) => (
        <g key={y}>
          <path d={`M738 ${y - 0.5}H${end}`} stroke="#cf9fb0" />
          <Arrow x={737} y={y - 0.5} dir="l" fill="#912c51" />
        </g>
      ))}
      <path d="M736.500 155v160" stroke="#d9a3b6" />
      <path d="M734 155v160" stroke="#e165e1" strokeWidth="1.500" strokeDasharray="6 3" />
      <DimV x={852} y1={155} y2={179} />
      <DimV x={852} y1={180} y2={264} />
      <DimV x={852} y1={264} y2={315} />
      <Label x={845} y={167} w={14} turn>1.500</Label>
      <Label x={852} y={221} turn>5.300</Label>
      <Label x={852} y={289} turn>3.200</Label>
      <g fill="#8c3352">
        <text x="763" y="178">7.140</text>
        <text x="809" y="262">20.496</text>
        <text x="834" y="313">27.900</text>
        <circle cx="761" cy="180" r="1" />
        <circle cx="806" cy="264" r="1" />
        <circle cx="799" cy="264" r="1" />
        <circle cx="831" cy="315" r="1" />
      </g>
      {[180, 264, 315].map((y) => (
        <g key={y}>
          <Arrow x={734} y={y - 0.5} dir="r" fill="#777" />
          <rect x="733" y={y - 1.5} width="2" height="2" fill="#e0182c" />
        </g>
      ))}
      <rect x="733" y="154" width="2" height="2" fill="#d97a1c" />

      {REDS.map(([x, y]) => (
        <rect key={`${x}-${y}`} x={x - 1} y={y - 0.5} width="2" height="2" fill="#ee1c25" />
      ))}

      <path d="M335 315.500h14" stroke="#d93a3a" strokeWidth="1.500" />
      <path d="M355 315.500l-7-2.200v4.400z" fill="#e81123" />
      <path d="M334.500 315v15" stroke="#1f1f80" strokeWidth="1.200" />
      <path d="M334.500 336l-2-7h4z" fill="#1f1f80" />
      <circle cx="334.500" cy="315.500" r="1.800" fill="#2ec41c" />
      <path d="M189.500 385.500v15" stroke="#1f1f80" strokeWidth="1.400" />
      <path d="M189.500 406l-2-6h4z" fill="#1f1f80" />
      <path d="M190 385h15" stroke="#d93a3a" strokeWidth="1.200" />
      <path d="M211 385l-6-2.200v4.400z" fill="#e81123" />
      <circle cx="189.500" cy="385" r="1.900" fill="#2ec41c" />
      <g fill="#e0404a">
        <text x="360" y="318">X</text>
        <text x="214" y="387">X</text>
      </g>
      <g fill="#33337a">
        <text x="333" y="344">Z</text>
        <text x="188" y="414">Z</text>
      </g>

      <path d="M763 369.500v9l2-2 1.500 3.500 1.500-.8-1.500-3.200h2.700z" fill="#fff" stroke="#555" strokeWidth=".9" />
    </svg>
  );
}

/* ---------- branding pieces ---------- */

function Flag() {
  return (
    <svg viewBox="0 0 61 42" className="h-[42px] w-[61px]" role="img" aria-label="USA">
      <rect width="61" height="42" fill="#fff" />
      {steps(0, 12, 2).map((i) => (
        <rect key={i} y={(i * 42) / 13} width="61" height={42 / 13} fill="#d9131e" />
      ))}
      <rect width="32" height="22.500" fill="#2b3566" />
      {steps(0, 8, 1).map((r) =>
        steps(0, r % 2 ? 4 : 5, 1).map((c) => (
          <circle key={`${r}-${c}`} cx={3 + c * 5.2 + (r % 2 ? 2.6 : 0)} cy={2.5 + r * 2.2} r=".8" fill="#fff" />
        )),
      )}
    </svg>
  );
}

function Book() {
  return (
    <svg viewBox="0 0 50 36" className="h-[36px] w-[50px] shrink-0">
      <path d="M0 2h50v32H30c-1 2-9 2-10 0H0z" fill="#8e2319" />
      <path d="M2 2C9-.5 20-.5 25 2c5-2.500 16-2.500 23 0v30.500H2z" fill="#f7ebcb" />
      <path d="M2 32.500C9 29 20 29 25 31.500c5-2.500 16-2.500 23 1z" fill="#dccfa6" />
      <path d="M25 2v30" stroke="#e8d9b2" strokeWidth="1.500" />
      <path
        d="M7 6.500c5-1.500 10-1.500 15 0M7 10.500c5-1.500 10-1.500 15 0M7 14.500c5-1.500 10-1.500 15 0M7 26c5-1.500 10-1.500 15 0M28.500 6.500c5-1.500 10-1.500 15 0M28.500 10.500c5-1.500 10-1.500 15 0M28.500 14.500c5-1.500 10-1.500 15 0M28.500 26c5-1.500 10-1.500 15 0"
        fill="none"
        stroke="#cbbd94"
        strokeWidth="1.300"
      />
      <path d="M7 17c5-1 10-1 15 0v5.500H7zM28.500 17c5-1 10-1 15 0v5.500h-15z" fill="#cbbd94" />
      <path d="M12 31h4v4l-2-1-2 1z" fill="#13a2dc" />
    </svg>
  );
}

function WindowButtons({ className }: { className: string }) {
  return (
    <div className={className}>
      <button type="button" aria-label="Minimieren">
        <svg viewBox="0 0 6 6" className="h-[6px] w-[6px]"><path d="M1 3.500h4" stroke="currentColor" /></svg>
      </button>
      <button type="button" aria-label="Wiederherstellen">
        <svg viewBox="0 0 6 6" className="h-[6px] w-[6px]"><path d="M.5 2h3.500v3.500H.5zM2 2V.5h3.500V4H4" fill="none" stroke="currentColor" strokeWidth=".8" /></svg>
      </button>
      <button type="button" aria-label="Schließen">
        <svg viewBox="0 0 6 6" className="h-[6px] w-[6px]"><path d="m.8.8 4.400 4.400M5.200.8.8 5.200" stroke="currentColor" strokeWidth=".9" /></svg>
      </button>
    </div>
  );
}

export default function App() {
  return (
    <div className="flex h-screen min-h-[576px] flex-col overflow-hidden bg-white font-['Open_Sans','Noto_Sans',sans-serif] text-[6px] text-[#111]">
      <main className="relative flex min-h-0 flex-1 overflow-hidden bg-[#f3f3f3]">
        <Navigator />

        <section className="ml-[2px] flex min-w-0 flex-1 flex-col bg-white">
          <header className="shrink-0 bg-[#f8f8f8]">
            <div className="flex h-[12px] items-center justify-between bg-[#f2f2f2] pl-[4px] text-[#999]">
              <span>top</span>
              <WindowButtons className="mr-[9px] flex items-center gap-[18px]" />
            </div>
            <div className="flex h-[11px] items-center justify-between pl-[14px]">
              <div className="flex gap-2">
                {["Berechnen", "Ergebnisse", "Extras", "Optionen", "Fenster", "CAD-BIM", "Hilfe"].map((m) => (
                  <button key={m} type="button">{m}</button>
                ))}
              </div>
              <div className="flex items-center gap-[6px]">
                <span>Online License 2 | Markus Baumgärtel | Dlubal Software GmbH</span>
                <WindowButtons className="mr-px flex items-center gap-[4px]" />
              </div>
            </div>
            <div className="flex h-[15px] items-center overflow-hidden pl-[2px]">
              <Tools items="redo v | *panel *sheet doc console report calc | poly lasso ring lasso yellowTable | starLoad load" />
              <button type="button" className="flex h-[11px] w-[143px] shrink-0 items-center bg-[#e9e8f4] pl-[3px] whitespace-nowrap">
                <span className="h-[7px] w-[14px] shrink-0 bg-[#c9f3f8]" />
                <span className="h-[7px] w-[16px] shrink-0 bg-[#c3c3c3]" />
                <span className="w-[19px] shrink-0 pl-[3px] text-left">LF3</span>
                <span className="flex-1 text-left">Anzeige Lastverteilung Bode...</span>
                <Chevron open className="mr-px h-[5px] w-[5px] shrink-0" />
              </button>
              <button type="button" aria-label="Zurück" className="w-[9px] shrink-0">
                <svg viewBox="0 0 9 6" className="h-[6px] w-[9px]"><path d="M6 1v4L4 3z" fill="#222" /></svg>
              </button>
              <button type="button" aria-label="Weiter" className="w-[9px] shrink-0">
                <svg viewBox="0 0 9 6" className="h-[6px] w-[9px]"><path d="M4 1v4l2-2z" fill="#222" /></svg>
              </button>
              <Tools items="filterX v eye grayRake *support *beam cube *mesh v deform dims blueDim blackDim blackDim v = lensX box boxStar boxTool - axis axisY axisZ axis v gear v | layers v surface v ten v grayFrame v redWeb" />
            </div>
            <div className="flex h-[15px] items-center overflow-hidden pl-[4px]">
              <Tools items="nodeGrid | starBlue v starSurface v starOpening v starSolid v bluePanel - pin starFrame starFrame boxStar starGreen v starSolid v = filter - archG frameG - bowG patchG cube arrowsG slashG - dims2 dims2 dims frameG dims2 note - chartG v =" />
              <button type="button" className="flex h-[11px] w-[105px] shrink-0 items-center bg-[#e9e8f4] pl-px whitespace-nowrap">
                <span className="h-[7px] w-[7px] shrink-0 bg-[#c9f3f8]" />
                <span className="flex-1 pl-[2px] text-left">1 - Global XYZ</span>
                <Chevron open className="mr-px h-[5px] w-[5px] shrink-0" />
              </button>
              <Tools items="csAxes - nodeGrid target blueSurf blueSurf *redGrid - tagG turnG mirrorG cross camera | greenTable v lineI v | bars fork bars fork" />
              <span className="mr-px ml-auto">»</span>
            </div>
          </header>

          <div className="relative flex min-h-0 flex-1 flex-col pt-[2px]">
            <p className="h-[9px] pl-[3px] leading-[9px]">LF3 - Anzeige Lastverteilung Bodenschichten</p>
            <p className="h-[9px] pl-[3px] leading-[9px]">Lasten [kN/m]</p>
            <Drawing />
            <p className="absolute right-[3px] bottom-[4px] leading-[10px]">Abmessungen [m]</p>
          </div>

          <div className="flex h-[11px] shrink-0 items-center justify-between bg-[#dbe5f0] pr-[3px] pl-[4px]">
            <span className="font-semibold text-[#444]">Materialien</span>
            <span className="flex items-center gap-[6px] text-[#333]">
              <svg viewBox="0 0 6 6" className="h-[6px] w-[6px]"><path d="M.5 2h3.500v3.500H.5zM2 2V.5h3.500V4H4" fill="none" stroke="currentColor" strokeWidth=".8" /></svg>
              <svg viewBox="0 0 6 6" className="h-[6px] w-[6px]"><path d="m.8.8 4.400 4.400M5.200.8.8 5.200" stroke="currentColor" /></svg>
            </span>
          </div>
        </section>

        <div className="absolute top-0 left-0 flex h-[66px]">
          <div className="flex w-[66px] items-center justify-center bg-[#c5785c]">
            <svg viewBox="0 0 66 66" className="h-[66px] w-[66px]">
              <path d="M31.500 31.500 51 51M51.500 36.500v15H36" fill="none" stroke="#fff" strokeWidth="5" strokeLinecap="round" strokeLinejoin="round" />
            </svg>
          </div>
          <div className="flex w-[95px] items-center justify-center bg-[#b9b9b9]">
            <Flag />
          </div>
        </div>

        <div className="absolute top-[36px] -right-[8px] flex h-[86px] w-[86px] flex-col items-center bg-[#20286e] pt-[23px] [clip-path:circle(50%)]">
          <svg viewBox="0 0 44 23" className="h-[23px] w-[44px]">
            <path d="M0 0h44v14.500H0zM0 17h44v6H0z" fill="#fff" />
            <path d="M14.500 1v21" stroke="#20286e" strokeWidth="2.400" />
            <path d="M14 2 3 13.500M15 2l11 11.500M15 2l24 11.500M0 14h44" fill="none" stroke="#20286e" strokeWidth="1" />
          </svg>
          <span className="text-[14px] leading-[20px] font-bold text-white">Dlubal</span>
        </div>
      </main>

      <footer className="relative flex h-32 shrink-0 bg-[#9e5e48] font-['Liberation_Serif','Noto_Serif_CJK_SC','Noto_Sans_CJK_SC',serif] font-light text-white">
        <div className="absolute inset-y-0 right-0 w-[345px] bg-[#c5785c] [clip-path:polygon(63px_0,100%_0,100%_100%,0_100%)]" />
        <h1 className="relative flex-1 pt-[16px] pl-[41px] text-[38px] leading-[46px]">
          <span>知识库</span>{" "}
          <span className="ml-[10px] font-['Noto_Serif_CJK_SC','Liberation_Serif',serif] text-[36px] leading-none">001816</span>{" "}
          <span className="ml-[12px] font-['Noto_Serif_CJK_SC','Liberation_Serif',serif] text-[36px] leading-none">|</span>
          <span className="block text-[36px] leading-[24px] font-bold">…</span>
        </h1>
        <div className="relative flex w-[333px] shrink-0 items-center gap-4 text-[28px]">
          <Book />
          <span>知识库</span>
        </div>
      </footer>
      <div className="h-[18px] shrink-0 bg-[#522c20]" />
    </div>
  );
}
